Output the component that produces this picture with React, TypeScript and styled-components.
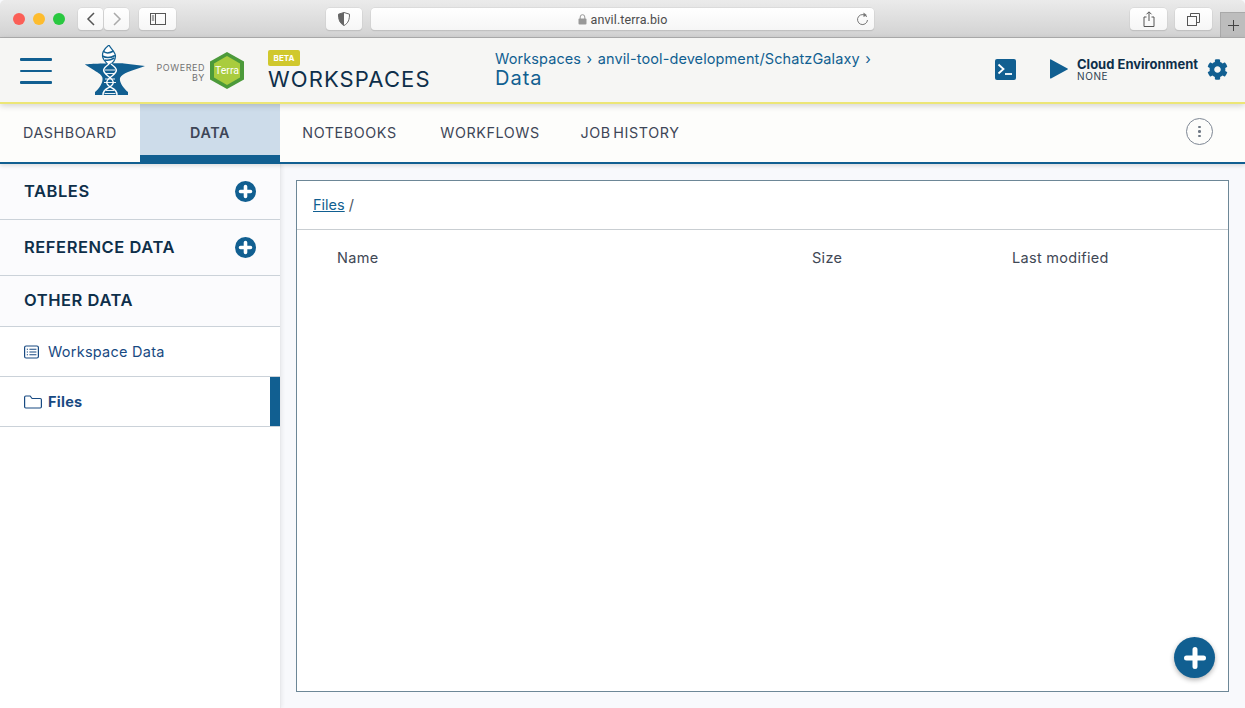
import React from "react";
import styled, { createGlobalStyle } from "styled-components";
import { FaCog } from "react-icons/fa";

const BLUE = "#115f91";
const NAVY = "#0e2f4a";
const FONT = `Inter, "Open Sans", "Liberation Sans", sans-serif`;

const Global = createGlobalStyle`
  html, body { margin: 0; padding: 0; height: 100%; background: #fff; overflow: hidden; }
  #root { height: 708px; }
  * { box-sizing: border-box; }
`;

const Page = styled.div`
  width: 1245px; height: 708px; display: flex; flex-direction: column;
  font-family: ${FONT}; background: #f8f9fc; overflow: hidden;
`;

/* ---------- Safari chrome ---------- */
const Chrome = styled.div`
  height: 38px; flex: none; display: flex; align-items: flex-start; padding: 8px 0 0 13px;
  background: linear-gradient(#ebebeb, #d2d2d2); border-bottom: 1px solid #aeaeae;
  border-radius: 5px 5px 0 0; position: relative;
`;
const Lights = styled.div`display: flex; gap: 8px; margin-top: 5px; margin-right: 13px;`;
const Light = styled.span<{ $c: string }>`
  width: 12px; height: 12px; border-radius: 50%; background: ${p => p.$c};
`;
const ChromeBtn = styled.div<{ $w: number; $ml?: number }>`
  width: ${p => p.$w}px; height: 22px; margin-left: ${p => p.$ml ?? 0}px; flex: none;
  display: flex; align-items: center; justify-content: center;
  background: linear-gradient(#fff, #f6f6f6); border-radius: 4px;
  box-shadow: 0 0 0 .5px #d0d0d0, 0 1px 1px rgba(0,0,0,.18);
`;
const Address = styled(ChromeBtn)`
  position: relative; gap: 4px; color: #4c4c4c; font: 12.5px "Roboto", "Liberation Sans", sans-serif;
  letter-spacing: .1px;
`;
const Reload = styled.svg`position: absolute; right: 5px; top: 4px;`;
const NewTab = styled.div`
  position: absolute; right: 0; bottom: 0; width: 25px; height: 25px; background: #bdbdbd;
  border-left: 1px solid #a9a9a9; border-top: 1px solid #a9a9a9; display: flex;
  align-items: center; justify-content: center;
`;

/* ---------- App header ---------- */
const Header = styled.header`
  height: 66px; flex: none; display: flex; align-items: stretch; position: relative; z-index: 3;
  background: #f6f6f4; border-bottom: 2px solid #ece676; box-shadow: 0 2px 6px rgba(0,0,0,.16);
`;
const Burger = styled.div`
  width: 32px; margin: 20px 0 0 20px; flex: none; display: flex; flex-direction: column; gap: 9px;
`;
const BurgerBar = styled.span`height: 2.5px; background: ${BLUE}; border-radius: 1px;`;
const AnvilLogo = styled.svg`margin: 7px 0 0 33px; flex: none;`;
const Powered = styled.div`
  width: 50px; margin: 25px 0 0 10px; flex: none; text-align: right; color: #737373;
  font-size: 9px; line-height: 10px; letter-spacing: .55px; white-space: nowrap;
`;
const TerraLogo = styled.svg`margin: 14px 0 0 5px; flex: none;`;
const Brand = styled.div`margin: 12px 0 0 24px; width: 227px; flex: none; display: flex; flex-direction: column; align-items: flex-start;`;
const Beta = styled.span`
  width: 32px; height: 16px; background: #d0c82c; color: #fff; border-radius: 2px;
  font-size: 8px; font-weight: 700; display: flex; align-items: center; justify-content: center;
`;
const BrandName = styled.div`
  color: ${NAVY}; font-size: 22px; line-height: 26px; letter-spacing: 1.1px; font-weight: 400;
`;
const Crumbs = styled.div`margin-top: 11px; width: 500px; flex: none; color: ${BLUE};`;
const CrumbLine = styled.div`font-size: 14.5px; line-height: 20px; font-weight: 400; letter-spacing: .1px; white-space: nowrap;`;
const CrumbSep = styled.span`margin: 0 5.5px;`;
const CrumbTitle = styled.div`font-size: 20px; line-height: 19px; letter-spacing: 1px;`;
const TermIcon = styled.svg`margin-top: 21px; flex: none;`;
const PlayIcon = styled.svg`margin: 21px 0 0 34px; flex: none;`;
const Cloud = styled.div`margin: 19px 0 0 9px; width: 130px; flex: none; color: ${NAVY};`;
const CloudTitle = styled.div`font-size: 13px; font-weight: 700; line-height: 14px; white-space: nowrap;`;
const CloudSub = styled.div`font-size: 10px; line-height: 10px; color: #2c3e50; letter-spacing: .6px;`;
const Gear = styled(FaCog)`margin: 21px 0 0 0; color: ${BLUE}; flex: none;`;

/* ---------- Tabs ---------- */
const Tabs = styled.nav`
  height: 60px; flex: none; display: flex; align-items: stretch; position: relative; z-index: 2;
  background: #fdfdfb; border-bottom: 2px solid ${BLUE}; box-shadow: 0 2px 4px rgba(0,0,0,.12);
`;
const Tab = styled.div<{ $w: number; $active?: boolean }>`
  width: ${p => p.$w}px; flex: none; display: flex; align-items: center; justify-content: center;
  color: #3d4657; font-size: 14.3px; letter-spacing: .6px; word-spacing: -2px;
  padding-bottom: ${p => (p.$active ? "2px" : "1px")};
  font-weight: ${p => (p.$active ? 600 : 400)};
  background: ${p => (p.$active ? "#cddcea" : "transparent")};
  box-shadow: ${p => (p.$active ? `inset 0 -8px 0 ${BLUE}` : "none")};
  margin-bottom: ${p => (p.$active ? "-1px" : "0")};
`;
const KebabWrap = styled.div`
  width: 27px; height: 27px; border: 1.3px solid #7e8794; border-radius: 50%; margin: 14px 0 0 487px;
  display: flex; flex-direction: column; align-items: center; justify-content: center; gap: 2px;
`;
const Dot = styled.span`width: 2.6px; height: 2.6px; border-radius: 50%; background: #6f7885;`;

/* ---------- Body ---------- */
const Body = styled.div`flex: 1; display: flex; min-height: 0;`;
const Side = styled.aside`
  width: 281px; flex: none; background: #fff; border-right: 1px solid #e8e9ec;
  box-shadow: 1px 0 4px rgba(0,0,0,.07); position: relative; z-index: 1;
`;
const Section = styled.div<{ $h: number }>`
  height: ${p => p.$h}px; display: flex; align-items: center; justify-content: space-between;
  padding: 0 24px 1px; background: #fbfbfd; border-bottom: 1px solid #cbd2d9; color: ${NAVY};
  font-size: 16.5px; font-weight: 600; letter-spacing: .55px;
`;
const PlainSection = styled(Section)`padding-bottom: 2px;`;
const Item = styled.div<{ $active?: boolean }>`
  height: 50px; display: flex; align-items: center; padding-left: 24px; position: relative;
  border-bottom: 1px solid #cbd2d9; color: #184a82; font-size: 14.5px; letter-spacing: .26px;
  font-weight: ${p => (p.$active ? 700 : 400)};
`;
const ItemIcon = styled.svg`width: 24px; flex: none;`;
const ActiveBar = styled.span`
  position: absolute; right: 0; top: 0; bottom: 0; width: 10px; background: ${BLUE};
`;
const Main = styled.main`flex: 1; padding: 16px 16px 16px 15px; min-width: 0;`;
const Panel = styled.section`
  height: 100%; background: #fff; border: 1px solid #6d8797; position: relative;
`;
const PanelHead = styled.div`
  height: 49px; padding: 0 16px 2px; display: flex; align-items: center; gap: 4px;
  border-bottom: 1px solid #c9ced2; font-size: 14.5px; color: #4a5562;
`;
const FilesLink = styled.a`color: ${BLUE}; text-decoration: underline;`;
const Columns = styled.div`
  display: grid; grid-template-columns: 475px 200px 1fr; padding: 19px 0 0 40px;
  font-size: 14.5px; line-height: 18px; color: #3f4855; letter-spacing: .3px;
`;
const Fab = styled.div`
  position: absolute; right: 13px; bottom: 13px; width: 41px; height: 41px; border-radius: 50%;
  background: ${BLUE}; box-shadow: 0 2px 5px rgba(0,0,0,.3); display: flex; align-items: center; justify-content: center;
`;

const PlusCircle = () => (
  <svg width="21" height="21" viewBox="0 0 21 21">
    <circle cx="10.5" cy="10.5" r="10.5" fill={BLUE} />
    <path d="M10.5 5.500v10M5.500 10.5h10" stroke="#fff" strokeWidth="3.6" strokeLinecap="round" />
  </svg>
);

export default function App() {
  return (
    <Page>
      <Global />
      <Chrome>
        <Lights>
          <Light $c="#fb5f57" /><Light $c="#fdbc2e" /><Light $c="#29c840" />
        </Lights>
        <ChromeBtn $w={25}>
          <svg width="10" height="14" viewBox="0 0 10 14"><path d="M8 1 2 7l6 6" fill="none" stroke="#555" strokeWidth="1.5" /></svg>
        </ChromeBtn>
        <ChromeBtn $w={25} $ml={1}>
          <svg width="10" height="14" viewBox="0 0 10 14"><path d="m2 1 6 6-6 6" fill="none" stroke="#aaa" strokeWidth="1.5" /></svg>
        </ChromeBtn>
        <ChromeBtn $w={37} $ml={10}>
          <svg width="16" height="12" viewBox="0 0 16 12">
            <rect x=".5" y=".5" width="15" height="11" fill="none" stroke="#555" />
            <path d="M5.5 .5v11M1.8 3h2.4M1.8 5h2.4M1.8 7h2.4" stroke="#555" fill="none" />
          </svg>
        </ChromeBtn>
        <ChromeBtn $w={36} $ml={150}>
          <svg width="12" height="14" viewBox="0 0 12 14">
            <path d="M6 .5 11.5 2.2c0 5-1 9-5.5 11.3C1.500 11.200.500 7.200.500 2.200z" fill="#fff" stroke="#666" />
            <path d="M6 .5v13C1.500 11.200.500 7.200.500 2.200z" fill="#666" />
          </svg>
        </ChromeBtn>
        <Address $w={503} $ml={9}>
          <svg width="9" height="11" viewBox="0 0 9 11">
            <rect x=".5" y="4.500" width="8" height="6" rx="1" fill="#999" />
            <path d="M2.200 5V3a2.300 2.300 0 0 1 4.600 0v2" fill="none" stroke="#999" />
          </svg>
          anvil.terra.bio
          <Reload width="13" height="14" viewBox="0 0 13 14">
            <path d="M10.800 5A5 5 0 1 0 11.500 8" fill="none" stroke="#777" />
            <path d="M7.500 .5 11 3.200l-3.500 1.800z" fill="#777" />
          </Reload>
        </Address>
        <ChromeBtn $w={37} $ml={256}>
          <svg width="12" height="16" viewBox="0 0 12 16">
            <path d="M3.500 6H1v9.500h10V6H8.500M6 10V1M3.500 3.300 6 .8l2.500 2.500" fill="none" stroke="#555" />
          </svg>
        </ChromeBtn>
        <ChromeBtn $w={37} $ml={8}>
          <svg width="13" height="13" viewBox="0 0 13 13">
            <rect x=".5" y="3.500" width="9" height="9" fill="none" stroke="#555" />
            <path d="M3.500 3.500V.5h9v9h-3" fill="none" stroke="#555" />
          </svg>
        </ChromeBtn>
        <NewTab>
          <svg width="11" height="11" viewBox="0 0 11 11"><path d="M5.500 0v11M0 5.500h11" stroke="#444" strokeWidth="1" /></svg>
        </NewTab>
      </Chrome>

      <Header>
        <Burger><BurgerBar /><BurgerBar /><BurgerBar /></Burger>
        <AnvilLogo width="60" height="50" viewBox="0 0 60 50">
          <path d="M0 19.500C3 19 30 18 39 18.500L60 21c-5 2-12 4-17 6-4 1.500-7 3.500-8 6-1 4 4 11 8 14v3H10v-3c4-3 8-9 7.500-14-.5-3-4-5-8-7.500z" fill={BLUE} />
          <path d="M24 0c-5 4-7.500 9-6 13 1 3 4 5 5.500 7.500 4-2 7-5.500 7-9.500 0-4-4.500-7-6.500-11z" fill="#fff" stroke={BLUE} strokeWidth="1.200" />
          <path d="M18 6c3 3 7 2 10.500 0M17.500 11c4 2.500 8 2 12.500-.5M20 15c3 1 6 0 9.500-2" fill="none" stroke={BLUE} strokeWidth="1.500" />
          <path d="M24 19c-7 5-7 7-1 12 7 5 7 8 0 12-4 2-5 4-5 7M26 19c7 5 7 7 1 12-7 5-7 8 0 12 4 2 5 4 5 7" fill="none" stroke="#fff" strokeWidth="1.400" />
          <path d="M19.500 25h11M20 28.500h10M20 34h10M19 37.500h12M21 45.500h8M19.500 48.500h11" stroke="#fff" strokeWidth=".9" />
        </AnvilLogo>
        <Powered>POWERED<br />BY</Powered>
        <TerraLogo width="34" height="37" viewBox="0 0 34 37">
          <path d="M17 0 34 9.500v18L17 37 0 27.500v-18z" fill="#4c9a3a" />
          <path d="M17 4 30 11.500v14L17 33 4 25.500v-14z" fill="#a9cc3e" />
          <text x="17" y="22" textAnchor="middle" fontSize="10.500" fill="#fff" fontFamily="Roboto, sans-serif">Terra</text>
        </TerraLogo>
        <Brand>
          <Beta>BETA</Beta>
          <BrandName>WORKSPACES</BrandName>
        </Brand>
        <Crumbs>
          <CrumbLine>Workspaces<CrumbSep>›</CrumbSep>anvil-tool-development/SchatzGalaxy<CrumbSep>›</CrumbSep></CrumbLine>
          <CrumbTitle>Data</CrumbTitle>
        </Crumbs>
        <TermIcon width="21" height="21" viewBox="0 0 21 21">
          <rect width="21" height="21" rx="2" fill={BLUE} />
          <path d="m3.500 5.500 5 4.500-5 4.500" fill="none" stroke="#fff" strokeWidth="1.800" />
          <path d="M10 15h7" stroke="#fff" strokeWidth="1.800" />
        </TermIcon>
        <PlayIcon width="18" height="20" viewBox="0 0 18 20">
          <path d="M1 .5 17.500 9.500c.6.400.6.600 0 1L1 19.500c-.5.200-1 0-1-.6V1c0-.6.500-.8 1-.5z" fill={BLUE} />
        </PlayIcon>
        <Cloud>
          <CloudTitle>Cloud Environment</CloudTitle>
          <CloudSub>NONE</CloudSub>
        </Cloud>
        <Gear size={21} />
      </Header>

      <Tabs>
        <Tab $w={140}>DASHBOARD</Tab>
        <Tab $w={140} $active>DATA</Tab>
        <Tab $w={139}>NOTEBOOKS</Tab>
        <Tab $w={142}>WORKFLOWS</Tab>
        <Tab $w={138}>JOB HISTORY</Tab>
        <KebabWrap><Dot /><Dot /><Dot /></KebabWrap>
      </Tabs>

      <Body>
        <Side>
          <Section $h={56}>TABLES<PlusCircle /></Section>
          <Section $h={56}>REFERENCE DATA<PlusCircle /></Section>
          <PlainSection $h={51}>OTHER DATA</PlainSection>
          <Item>
            <ItemIcon height="14" viewBox="0 0 24 14" preserveAspectRatio="xMinYMid meet">
              <rect x=".6" y="1" width="13.800" height="12" rx="1.500" fill="none" stroke="#184a82" strokeWidth="1.200" />
              <path d="M2.800 4.200h1.200M5.400 4.200h7M2.800 7h1.200M5.400 7h7M2.800 9.800h1.200M5.400 9.800h7" stroke="#184a82" strokeWidth="1.100" />
            </ItemIcon>
            Workspace Data
          </Item>
          <Item $active>
            <ItemIcon height="14" viewBox="0 0 24 14" preserveAspectRatio="xMinYMid meet">
              <path d="M.6 2.200C.6 1.500 1.100 1 1.800 1h4.300l2 2.500h8.100c.7 0 1.200.5 1.200 1.200v7.100c0 .7-.5 1.200-1.200 1.200H1.800c-.7 0-1.200-.5-1.200-1.200z" fill="none" stroke="#184a82" strokeWidth="1.200" />
            </ItemIcon>
            Files
            <ActiveBar />
          </Item>
        </Side>
        <Main>
          <Panel>
            <PanelHead><FilesLink>Files</FilesLink> /</PanelHead>
            <Columns>
              <span>Name</span>
              <span>Size</span>
              <span>Last modified</span>
            </Columns>
            <Fab>
              <svg width="24" height="24" viewBox="0 0 24 24">
                <path d="M12 3.500v17M3.500 12h17" stroke="#fff" strokeWidth="5" strokeLinecap="round" />
              </svg>
            </Fab>
          </Panel>
        </Main>
      </Body>
    </Page>
  );
}
